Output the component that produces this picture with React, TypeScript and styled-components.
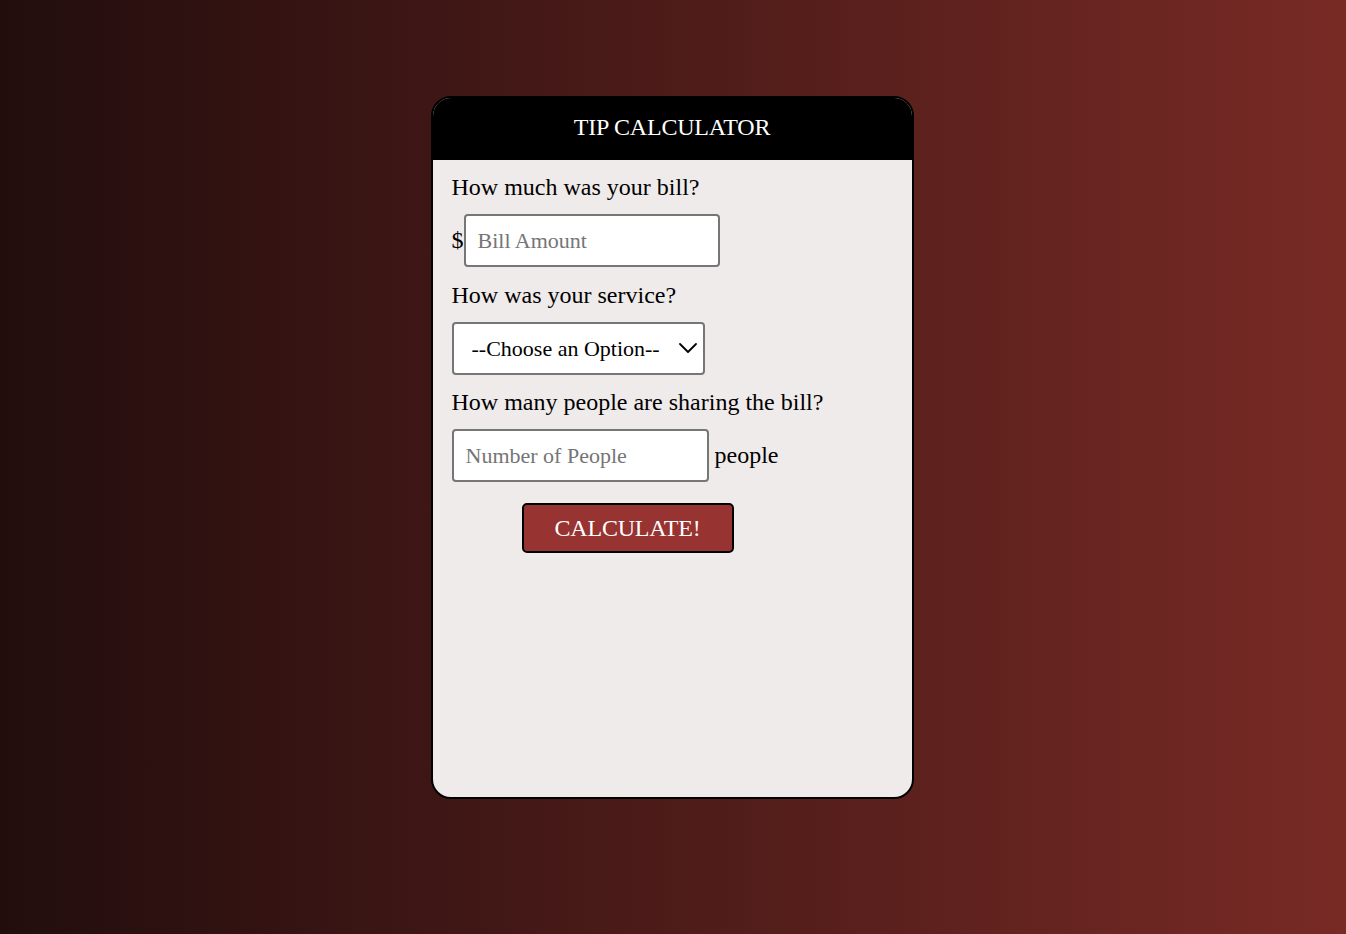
import { createGlobalStyle, styled } from 'styled-components';

const GlobalStyle = createGlobalStyle`
  html, body {
    margin: 0;
    padding: 0;
  }

  body {
    font-family: "Liberation Serif", "Times New Roman", serif;
    background: linear-gradient(to right, #220d0d, #782a25);
    min-height: 100vh;
  }
`;

const Page = styled.div`
  min-height: 934px;
  display: flex;
  justify-content: center;
  align-items: flex-start;
  padding-top: 96px;
  box-sizing: border-box;
`;

const Card = styled.div`
  width: 483px;
  height: 703px;
  margin-right: 2px;
  box-sizing: border-box;
  background: #f0ebeb;
  border: 2px solid #000;
  border-radius: 20px;
  overflow: hidden;
  display: flex;
  flex-direction: column;
`;

const Header = styled.div`
  height: 62px;
  flex-shrink: 0;
  box-sizing: border-box;
  padding-bottom: 3px;
  background: #000;
  color: #fff;
  font-size: 24px;
  display: flex;
  align-items: center;
  justify-content: center;
  letter-spacing: -0.2px;
`;

const Form = styled.div`
  display: flex;
  flex-direction: column;
  align-items: flex-start;
  gap: 15px;
  padding: 15px 19px;
`;

const Label = styled.div`
  font-size: 24px;
  line-height: 24px;
  color: #000;
`;

const Row = styled.div<{ $gap?: number }>`
  display: flex;
  align-items: center;
  gap: ${(p) => p.$gap ?? 0}px;
  font-size: 24px;
  margin-bottom: 1px;
`;

const TextInput = styled.input<{ $width: number }>`
  width: ${(p) => p.$width}px;
  height: 53px;
  box-sizing: border-box;
  border: 2px solid #767676;
  border-radius: 4px;
  background: #fff;
  padding: 0 12px;
  font-family: inherit;
  font-size: 22px;
  color: #000;
  outline: none;

  &::placeholder {
    color: #757575;
  }
`;

const SelectWrap = styled.div`
  position: relative;
  width: 253px;
  height: 53px;

  > svg {
    position: absolute;
    right: 8px;
    top: 21px;
    pointer-events: none;
  }
`;

const Select = styled.select`
  width: 100%;
  height: 100%;
  box-sizing: border-box;
  appearance: none;
  border: 2px solid #767676;
  border-radius: 4px;
  background: #fff;
  padding: 0 0 0 18px;
  font-family: inherit;
  font-size: 22px;
  color: #000;
  outline: none;
`;

const CalcButton = styled.button`
  margin: 5px 0 0 70px;
  width: 212px;
  height: 50px;
  box-sizing: border-box;
  background: #973330;
  color: #fff;
  border: 2px solid #000;
  border-radius: 5px;
  font-family: inherit;
  font-size: 24px;
  letter-spacing: -0.2px;
  cursor: pointer;
`;

export default function App() {
  return (
    <>
      <GlobalStyle />
      <Page>
        <Card>
          <Header>TIP CALCULATOR</Header>
          <Form>
            <Label>How much was your bill?</Label>
            <Row>
              $<TextInput $width={256} placeholder="Bill Amount" />
            </Row>
            <Label>How was your service?</Label>
            <SelectWrap>
              <Select defaultValue="0">
                <option value="0">--Choose an Option--</option>
                <option value="0.3">30% - Outstanding</option>
                <option value="0.2">20% - Good</option>
                <option value="0.15">15% - It was OK</option>
                <option value="0.1">10% - Bad</option>
                <option value="0.05">5% - Terrible</option>
              </Select>
              <svg width="18" height="10" viewBox="0 0 18 10" fill="none">
                <polyline points="1,1 9,9 17,1" stroke="#000" strokeWidth="1.8" strokeLinecap="round" strokeLinejoin="round" />
              </svg>
            </SelectWrap>
            <Label>How many people are sharing the bill?</Label>
            <Row $gap={6}>
              <TextInput $width={257} placeholder="Number of People" />
              people
            </Row>
            <CalcButton>CALCULATE!</CalcButton>
          </Form>
        </Card>
      </Page>
    </>
  );
}
